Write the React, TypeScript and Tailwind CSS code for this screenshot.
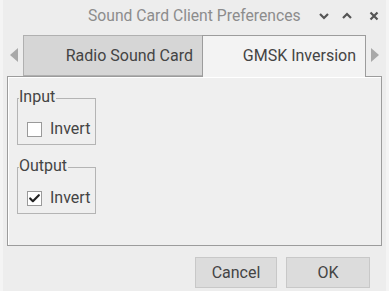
import { Check } from "lucide-react"

const GroupBox = ({ title, checked }: { title: string; checked: boolean }) => (
  <div className="relative ml-[9px] w-[79px] h-[47px] border border-[#b4b4b4]">
    <span className="absolute -top-[11px] left-[1px] bg-[#efefef] pr-[1px] text-[16px] leading-[18px] text-[#444]">
      {title}
    </span>
    <div className="flex items-center pl-[9px] pt-[21px]">
      <div className="w-[15px] h-[15px] bg-white border border-[#9a9a9a] flex items-center justify-center">
        {checked && <Check size={13} strokeWidth={4} className="text-[#222]" />}
      </div>
      <span className="ml-[8px] text-[16px] leading-[18px] text-[#444]">Invert</span>
    </div>
  </div>
)

export default function App() {
  return (
    <div
      className="w-[389px] h-[291px] bg-[#ededed] overflow-hidden flex flex-col border-l-[3px] border-r-[3px] border-[#f4f4f4]"
      style={{ fontFamily: "Roboto, 'Liberation Sans', sans-serif" }}
    >
      {/* title bar */}
      <div className="h-[32px] flex items-center">
        <div className="pl-[85px] text-[15.7px] text-[#8c8c8c]">Sound Card Client Preferences</div>
        <div className="ml-[18px] flex items-center gap-[13px] text-[#555]">
          <svg width="10" height="8" viewBox="0 0 10 8"><path d="M1 2 L5 6 L9 2" stroke="#555" strokeWidth="2.2" fill="none" /></svg>
          <svg width="10" height="8" viewBox="0 0 10 8"><path d="M1 6 L5 2 L9 6" stroke="#555" strokeWidth="2.2" fill="none" /></svg>
          <svg width="10" height="10" viewBox="0 0 10 10" className="ml-[4px]"><path d="M1.5 1.5 L8.5 8.5 M8.5 1.5 L1.5 8.5" stroke="#555" strokeWidth="2.2" /></svg>
        </div>
      </div>

      {/* tabs */}
      <div className="mt-[2px] h-[42px] flex items-end relative z-10">
        <div className="w-[20px] h-full flex items-center justify-center pl-[3px]">
          <svg width="9" height="14" viewBox="0 0 9 14"><path d="M8 0 L0 7 L8 14 Z" fill="#a8a8a8" /></svg>
        </div>
        <div className="w-[179px] h-[41px] bg-[#d6d6d6] border border-[#b0b0b0] border-r-0 flex items-center justify-end pr-[9px] text-[16px] text-[#444]">
          Radio Sound Card
        </div>
        <div className="w-[164px] h-[42px] -mb-[1px] bg-[#f3f3f3] border border-[#9c9c9c] border-b-0 flex items-center justify-end pr-[9px] pb-[1px] text-[16px] text-[#444]">
          GMSK Inversion
        </div>
        <div className="w-[17px] h-full flex items-center justify-center">
          <svg width="9" height="14" viewBox="0 0 9 14"><path d="M1 0 L9 7 L1 14 Z" fill="#a8a8a8" /></svg>
        </div>
      </div>

      {/* page */}
      <div className="ml-[4px] w-[375px] h-[170px] border border-[#9c9c9c] bg-[#efefef] shadow-[inset_1px_1px_0_#fff]">
        <div className="pt-[21px] flex flex-col gap-[22px]">
          <GroupBox title="Input" checked={false} />
          <GroupBox title="Output" checked={true} />
        </div>
      </div>

      {/* buttons */}
      <div className="mt-[11px] flex justify-end gap-[9px] pr-[16px]">
        <button className="w-[82px] h-[31px] bg-[#dcdcdc] border border-[#c8c8c8] text-[16px] text-[#444]">Cancel</button>
        <button className="w-[84px] h-[31px] bg-[#dcdcdc] border border-[#c8c8c8] text-[16px] text-[#444]">OK</button>
      </div>
    </div>
  )
}
